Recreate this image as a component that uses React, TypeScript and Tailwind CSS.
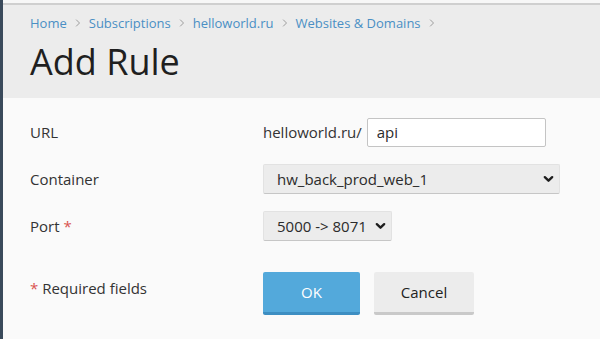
import React from "react";

const Chevron: React.FC<{ className?: string }> = ({ className }) => (
  <svg viewBox="0 0 12 8" className={className} fill="none">
    <path
      d="M2 2 6 5.8 10 2"
      stroke="#1e1e1e"
      strokeWidth="2.6"
      strokeLinecap="round"
      strokeLinejoin="round"
    />
  </svg>
);

const Crumb: React.FC<{ label: string }> = ({ label }) => (
  <span className="flex items-center">
    <a className="text-[#4a8fc4]">{label}</a>
    <svg viewBox="0 0 8 12" className="w-[6px] h-[10px] mx-[8px]" fill="none">
      <path d="M1.5 1.5 6 6l-4.5 4.5" stroke="#9a9a9a" strokeWidth="1.3" />
    </svg>
  </span>
);

const FakeSelect: React.FC<{ value: string; width: string }> = ({
  value,
  width,
}) => (
  <div
    className={`${width} h-[30px] flex items-center justify-between pl-[13px] pr-[5px] bg-[#ececec] border border-[#e2e2e2] border-b-[#c6c6c6] rounded-[2px] text-[15px] text-[#2b2b2b]`}
  >
    <span>{value}</span>
    <Chevron className="w-[11px] h-[8px]" />
  </div>
);

export default function App() {
  const crumbs = ["Home", "Subscriptions", "helloworld.ru", "Websites & Domains"];

  return (
    <div className="flex w-[600px] h-[339px] overflow-hidden font-['Open_Sans',sans-serif]">
      <div className="w-[3px] shrink-0 bg-[#3a4a5b]" />
      <div className="flex-1 flex flex-col bg-[#fafafa]">
        <div className="h-[3px] bg-[#f7f7f7]" />
        <div className="h-[2px] bg-[#cfcfcf]" />
        <div className="h-[93px] bg-[#ececec] px-[27px] pt-[9px]">
          <div className="flex items-center text-[13px] leading-[18px]">
            {crumbs.map((c) => (
              <Crumb key={c} label={c} />
            ))}
          </div>
          <h1 className="mt-[8px] text-[36px] leading-[44px] text-[#1f1f1f]">
            Add Rule
          </h1>
        </div>

        <div className="px-[27px] pt-[19px] flex flex-col gap-[17px] text-[15px] text-[#333]">
          <div className="flex items-center h-[30px]">
            <div className="w-[233px]">URL</div>
            <div className="flex items-center">
              <span className="mr-[5px]">helloworld.ru/</span>
              <input
                defaultValue="api"
                className="w-[179px] h-[29px] bg-white border border-[#c4c4c4] rounded-[2px] pl-[9px] text-[15px] text-[#2b2b2b] outline-none"
              />
            </div>
          </div>

          <div className="flex items-center h-[30px]">
            <div className="w-[233px]">Container</div>
            <FakeSelect value="hw_back_prod_web_1" width="w-[297px]" />
          </div>

          <div className="flex items-center h-[30px]">
            <div className="w-[233px]">
              Port <span className="text-[#d9534f]">*</span>
            </div>
            <FakeSelect value="5000 -> 8071" width="w-[129px]" />
          </div>

          <div className="flex items-start mt-[14px]">
            <div className="w-[233px] pt-[5px] leading-[22px]">
              <span className="text-[#d9534f]">*</span> Required fields
            </div>
            <div className="flex gap-[14px]">
              <button className="w-[97px] h-[43px] bg-[#53a9db] border-b-[3px] border-[#3d8ec2] rounded-[2px] text-white text-[15px]">
                OK
              </button>
              <button className="w-[100px] h-[43px] bg-[#ececec] border-b-[3px] border-[#c9c9c9] rounded-[2px] text-[#222] text-[15px]">
                Cancel
              </button>
            </div>
          </div>
        </div>
      </div>
    </div>
  );
}
